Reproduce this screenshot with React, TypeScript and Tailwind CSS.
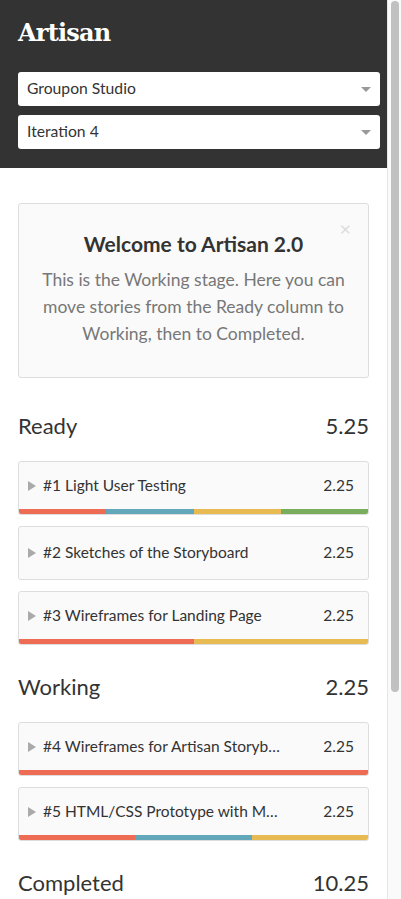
import React from "react";

type Story = { id: number; title: string; points: string; bars: string[] };

const ready: Story[] = [
  { id: 1, title: "Light User Testing", points: "2.25", bars: ["bg-[#ef6c54]", "bg-[#62a8ba]", "bg-[#e8bb52]", "bg-[#78ae5b]"] },
  { id: 2, title: "Sketches of the Storyboard", points: "2.25", bars: [] },
  { id: 3, title: "Wireframes for Landing Page", points: "2.25", bars: ["bg-[#ef6c54]", "bg-[#e8bb52]"] },
];

const working: Story[] = [
  { id: 4, title: "Wireframes for Artisan Storyboard", points: "2.25", bars: ["bg-[#ef6c54]"] },
  { id: 5, title: "HTML/CSS Prototype with Minimal Styling", points: "2.25", bars: ["bg-[#ef6c54]", "bg-[#62a8ba]", "bg-[#e8bb52]"] },
];

function Select({ label }: { label: string }) {
  return (
    <div className="flex items-center justify-between h-[34px] rounded-[3px] bg-white pl-[9px] pr-[9px]">
      <span className="text-[15.7px] text-[#333]">{label}</span>
      <span className="w-0 h-0 border-l-[5px] border-r-[5px] border-t-[5px] border-l-transparent border-r-transparent border-t-[#999]" />
    </div>
  );
}

function StoryCard({ story }: { story: Story }) {
  return (
    <div className="flex flex-col h-[54px] rounded-[3px] border border-[#ddd] bg-[#fafafa] overflow-hidden">
      <div className="flex flex-1 items-center pl-[9px] pr-[14px]">
        <span className="w-0 h-0 border-t-[5px] border-b-[5px] border-l-[8px] border-t-transparent border-b-transparent border-l-[#aaa] mr-[7px]" />
        <span className="w-[238px] truncate text-[15.5px] text-[#333]">
          #{story.id} {story.title}
        </span>
        <span className="ml-auto text-[15.5px] text-[#333]">{story.points}</span>
      </div>
      {story.bars.length > 0 && (
        <div className="flex h-[5px]">
          {story.bars.map((b, i) => (
            <div key={i} className={`flex-1 ${b}`} />
          ))}
        </div>
      )}
    </div>
  );
}

function Column({ name, total, stories }: { name: string; total: string; stories: Story[] }) {
  return (
    <div>
      <div className="flex justify-between items-center h-[30px] text-[22px] text-[#333]">
        <span>{name}</span>
        <span>{total}</span>
      </div>
      <div className="flex flex-col gap-[11px] mt-[21px]">
        {stories.map((s) => (
          <StoryCard key={s.id} story={s} />
        ))}
      </div>
    </div>
  );
}

export default function App() {
  return (
    <div className="flex w-[401px] h-[899px] overflow-hidden bg-white font-['Lato',sans-serif]">
      <div className="w-[387px] flex flex-col">
        <header className="h-[168px] bg-[#333] pl-[18px] pr-[7px] pt-[18px]">
          <h1 className="text-[24px] font-bold text-white font-['DejaVu_Serif',serif] tracking-[-0.8px] leading-[30px]">
            Artisan
          </h1>
          <div className="mt-[24px] flex flex-col gap-[9px]">
            <Select label="Groupon Studio" />
            <Select label="Iteration 4" />
          </div>
        </header>

        <main className="px-[18px] pt-[35px] flex flex-col">
          <div className="relative h-[175px] rounded-[3px] border border-[#ddd] bg-[#fafafa] px-[14px] pt-[26px] text-center">
            <span className="absolute right-[17px] top-[9px] text-[20px] text-[#ddd]">×</span>
            <h2 className="text-[21px] font-bold text-[#333] leading-[28px]">Welcome to Artisan 2.0</h2>
            <p className="mt-[8px] text-[17.5px] leading-[27px] text-[#777]">
              This is the Working stage. Here you can move stories from the Ready column to Working, then to Completed.
            </p>
          </div>

          <div className="mt-[32px]">
            <Column name="Ready" total="5.25" stories={ready} />
          </div>
          <div className="mt-[26px]">
            <Column name="Working" total="2.25" stories={working} />
          </div>
          <div className="mt-[26px] flex justify-between items-center h-[30px] text-[22px] text-[#333]">
            <span>Completed</span>
            <span>10.25</span>
          </div>
        </main>
      </div>

      <div className="w-[14px] h-full border-l border-[#e6e6e6] bg-[#fafafa] pl-[3px] pr-[2px] pt-[1px]">
        <div className="h-[691px] rounded-full bg-[#c1c1c1]" />
      </div>
    </div>
  );
}
